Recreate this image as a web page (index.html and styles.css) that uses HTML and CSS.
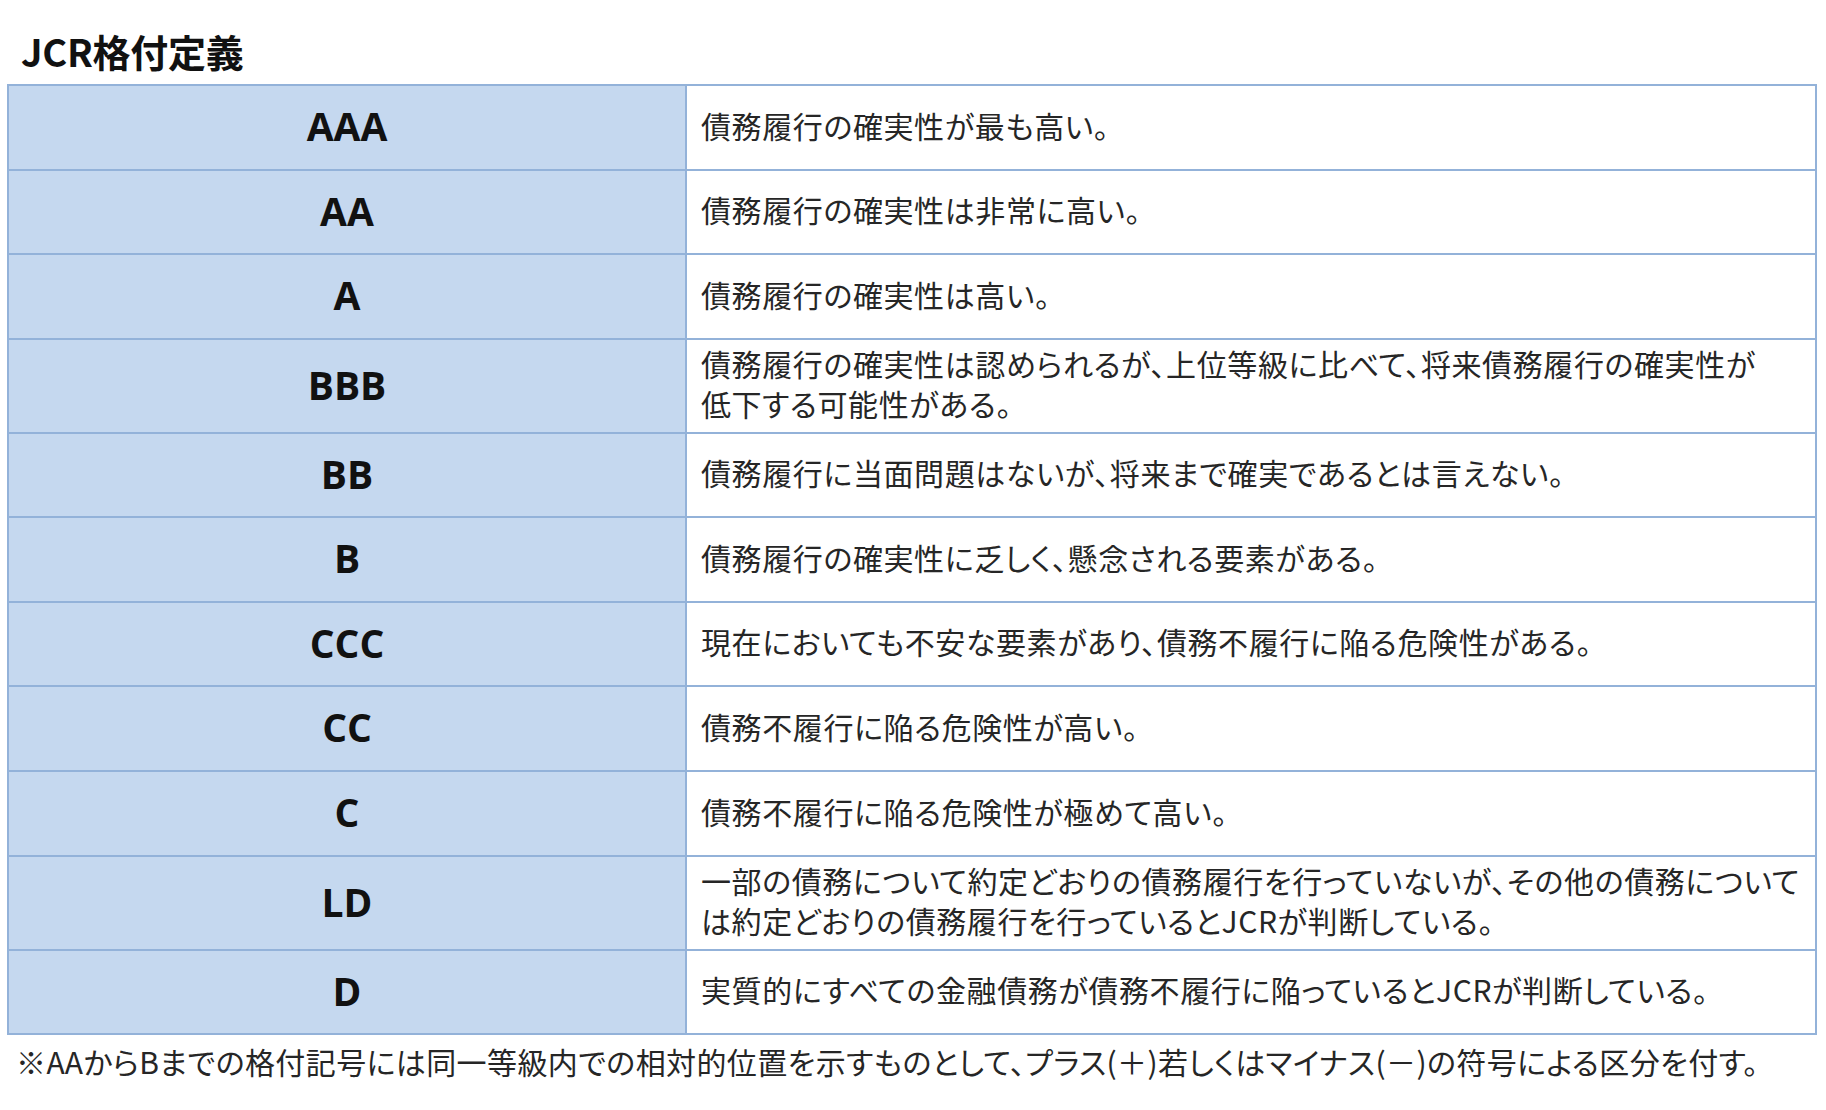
FILE: index.html
```html
<!DOCTYPE html>
<html lang="ja">
<head>
<meta charset="utf-8">
<title>JCR格付定義</title>
<link rel="stylesheet" href="styles.css">
</head>
<body>
<main class="page">
  <h1 class="title">JCR格付定義</h1>
  <table class="ratings">
    <colgroup>
      <col class="col-grade">
      <col class="col-desc">
    </colgroup>
    <tbody>
      <tr class="h85"><th>AAA</th><td>債務履行の確実性が最も高い。</td></tr>
      <tr class="h84"><th>AA</th><td>債務履行の確実性は非常に高い。</td></tr>
      <tr class="h85"><th>A</th><td>債務履行の確実性は高い。</td></tr>
      <tr class="h94"><th>BBB</th><td>債務履行の確実性は認められるが、上位等級に比べて、将来債務履行の確実性が<br>低下する可能性がある。</td></tr>
      <tr class="h84"><th>BB</th><td>債務履行に当面問題はないが、将来まで確実であるとは言えない。</td></tr>
      <tr class="h85"><th>B</th><td>債務履行の確実性に乏しく、懸念される要素がある。</td></tr>
      <tr class="h84"><th>CCC</th><td>現在においても不安な要素があり、債務不履行に陥る危険性がある。</td></tr>
      <tr class="h85"><th>CC</th><td>債務不履行に陥る危険性が高い。</td></tr>
      <tr class="h85"><th>C</th><td>債務不履行に陥る危険性が極めて高い。</td></tr>
      <tr class="h94"><th>LD</th><td>一部の債務について約定どおりの債務履行を行っていないが、その他の債務について<br>は約定どおりの債務履行を行っているとJCRが判断している。</td></tr>
      <tr class="h84"><th>D</th><td>実質的にすべての金融債務が債務不履行に陥っているとJCRが判断している。</td></tr>
    </tbody>
  </table>
  <p class="note">※AAからBまでの格付記号には同一等級内での相対的位置を示すものとして、プラス(＋)若しくはマイナス(－)の符号による区分を付す。</p>
</main>
</body>
</html>
```

FILE: styles.css
```css
html, body {
  margin: 0;
  padding: 0;
  background: #ffffff;
}

.page {
  padding: 32px 9px 0 7px;
  font-family: "Noto Sans CJK JP", "Noto Sans", sans-serif;
  color: #262626;
}

.title {
  margin: 0 0 14px 14px;
  font-size: 38px;
  line-height: 38px;
  font-weight: 700;
  color: #111111;
  letter-spacing: -0.3px;
}

.ratings {
  width: 1810px;
  table-layout: fixed;
  border-collapse: collapse;
  border: 2px solid #93b2d9;
}

.col-grade {
  width: 678px;
}

.ratings th,
.ratings td {
  border: 2px solid #93b2d9;
  padding: 0;
  vertical-align: middle;
}

.ratings th {
  padding-bottom: 4px;
  background: #c5d8ef;
  font-family: "Open Sans", "Noto Sans", sans-serif;
  font-weight: 700;
  font-size: 39px;
  color: #111111;
  text-align: center;
}

.ratings td {
  padding: 0 0 6px 14px;
  font-size: 30px;
  line-height: 40px;
  letter-spacing: 0.6px;
  font-feature-settings: "palt";
  text-align: left;
  white-space: nowrap;
  overflow: hidden;
}

.h84 { height: 84px; }
.h85 { height: 85px; }
.h94 { height: 94px; }

.note {
  margin: 6px 0 0 9px;
  font-size: 30px;
  line-height: 40px;
  letter-spacing: 0.4px;
  font-feature-settings: "palt";
  white-space: nowrap;
}
```
